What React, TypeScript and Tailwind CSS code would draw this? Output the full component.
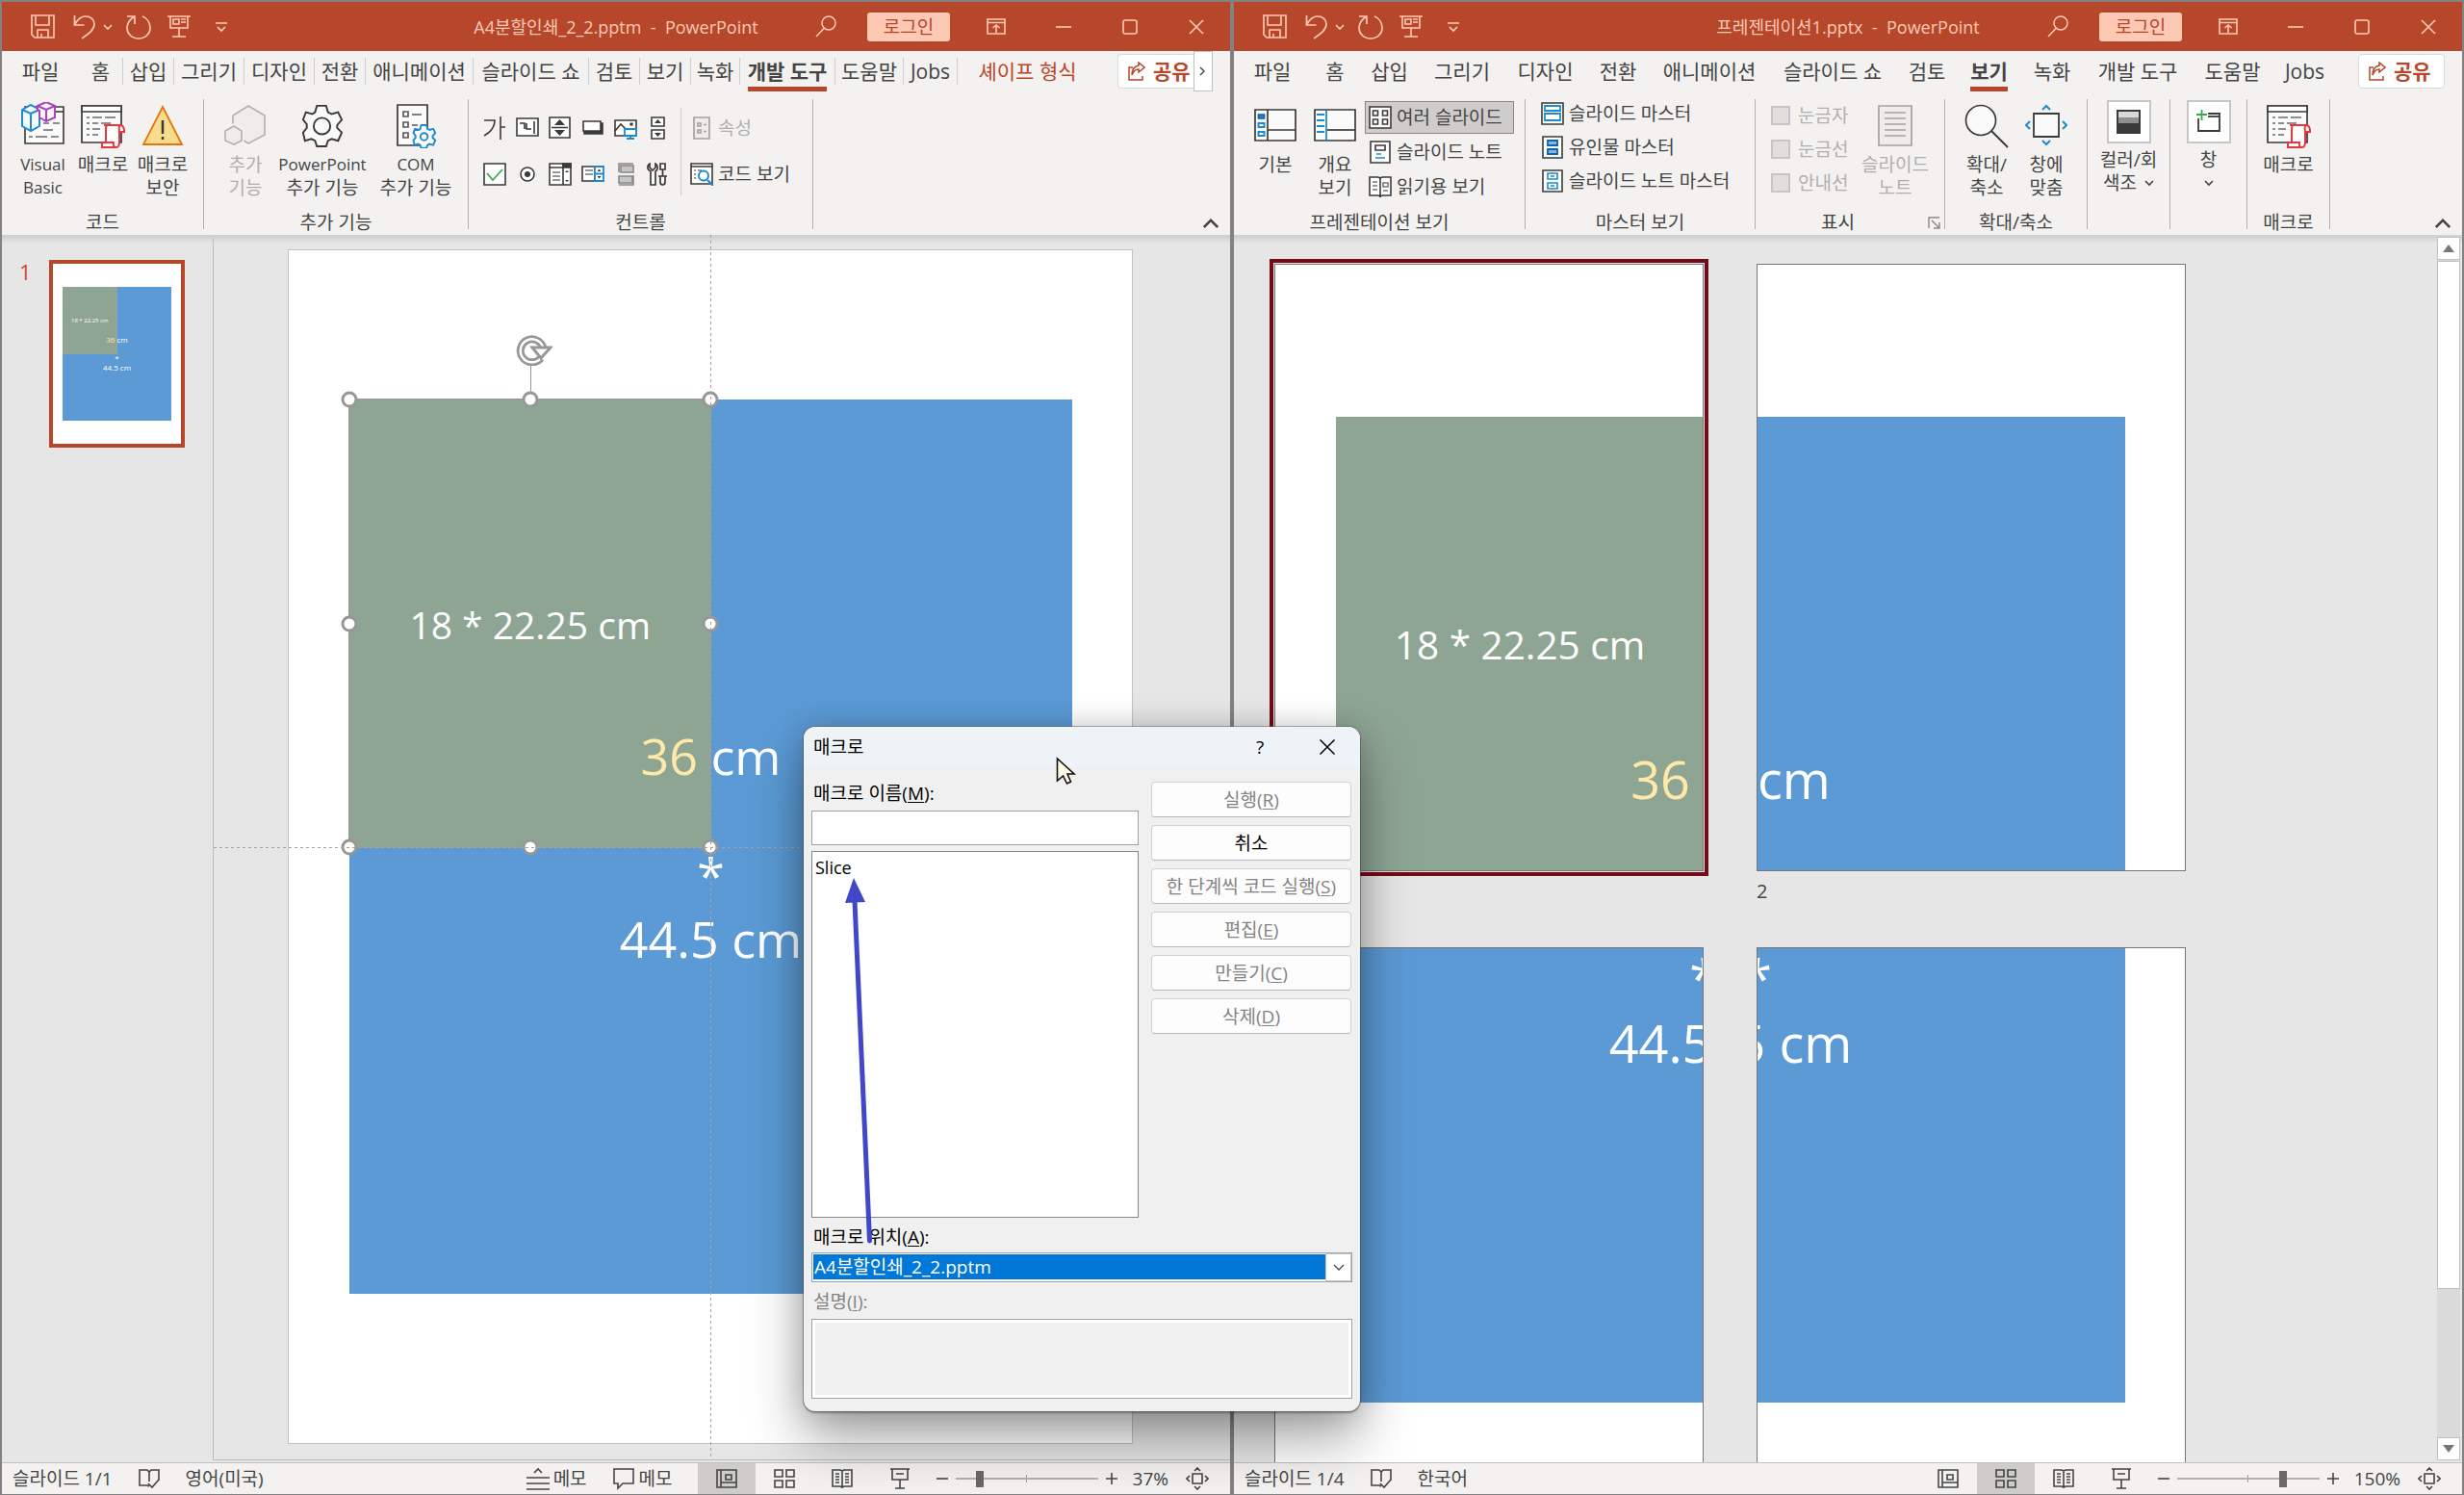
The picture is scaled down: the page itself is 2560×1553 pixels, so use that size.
import { ReactNode } from "react";
import { clsx } from "clsx";

const ink = "#3b3a39";
const blue = "#1e8bcd";

/* ---------- title bar icons ---------- */

const SaveIcon = () => (
  <svg width="25" height="25" viewBox="0 0 25 25" fill="none" stroke="currentColor" strokeWidth="1.6">
    <path d="M1 1h23v23H4l-3-3zM5 1v10h14V1M7 24v-8h11v8M11 20v4" />
  </svg>
);

const UndoIcon = () => (
  <svg width="24" height="26" viewBox="0 0 24 26" fill="none" stroke="currentColor" strokeWidth="1.7">
    <path d="M1.500 1v10h10M1.500 11C5 4 9 2 13 2c5 0 9 3 9 8 0 6-6 10-13 15" />
  </svg>
);

const RedoIcon = () => (
  <svg width="26" height="26" viewBox="0 0 26 26" fill="none" stroke="currentColor" strokeWidth="1.7">
    <path d="M1 2h8v8M9 2C4 5 1 9 1 14c0 6 5 11 12 11s12-5 12-11c0-5-3-10-8-12" />
  </svg>
);

const PresentIcon = () => (
  <svg width="24" height="25" viewBox="0 0 24 25" fill="none" stroke="currentColor" strokeWidth="1.6">
    <path d="M0 2h24M3 2v12h18V2M6 5h6v5H6zM14 5h5M14 8h5M12 14v9M5 23h14" />
  </svg>
);

const SearchIcon = () => (
  <svg width="22" height="24" viewBox="0 0 22 24" fill="none" stroke="currentColor" strokeWidth="1.5">
    <circle cx="14" cy="8" r="7" />
    <path d="M9.500 13L1 22" />
  </svg>
);

const Chevron = ({ size = 10, up = false }: { size?: number; up?: boolean }) => (
  <svg width={size} height={size} viewBox="0 0 10 10" fill="none" stroke="currentColor" strokeWidth="1.6">
    <path d={up ? "M.500 7.500L5 3l4.500 4.500" : "M1 3l4 4 4-4"} />
  </svg>
);

/* ---------- large ribbon icons ---------- */

const VisualBasicIcon = () => (
  <svg width="48" height="48" viewBox="0 0 48 48" fill="none" strokeWidth="1.600">
    <path d="M5 5h40v38H5z" fill="#fafafa" stroke={ink} />
    <path d="M33 10h12" stroke={ink} />
    <path d="M24 22h6M34 22h7M24 29h10M9 36h4M16 36h12M32 36h8" stroke="#6b6b6b" />
    <path d="M2 8l9-5 9 5v17l-9 5-9-5z" fill="#f5faff" stroke={blue} strokeWidth="2" />
    <path d="M2 8l9 4 9-4M11 12v18" stroke={blue} strokeWidth="2" />
    <path d="M18 4l9-4 9 4v12l-9 4-7-4V9l-2-1z" fill="#fbf5ff" stroke="#a845b8" strokeWidth="2" />
    <path d="M18 4l9 4 9-4M27 8v12" stroke="#a845b8" strokeWidth="2" />
  </svg>
);

const MacroIcon = () => (
  <svg width="46" height="48" viewBox="0 0 46 48" fill="none" strokeWidth="1.700">
    <path d="M1 4h41v38H1z" fill="#fafafa" stroke={ink} />
    <path d="M1 4h41v6H1z" fill="#fff" stroke={ink} />
    <path d="M6 16h3M12 16h10M25 16h11M6 22h3M12 22h6M21 22h10M6 28h3M12 28h8M6 34h3M12 34h6" stroke="#6b6b6b" />
    <path d="M24 24h17q4 0 4 7h-5v10q0 6-3 6H22v-5h4V28q0-4 2-4z" fill="#fff" stroke="#e8383d" strokeWidth="2" />
    <path d="M41 24q-2 1-1 7M22 42h12q-1 5 3 5" stroke="#e8383d" strokeWidth="2" />
  </svg>
);

const WarningIcon = () => (
  <svg width="44" height="48" viewBox="0 0 44 48">
    <path d="M22 5l20 39H2z" fill="#f8dc8e" stroke="#e3760b" strokeWidth="1.800" />
    <path d="M22 19v14M22 36v3" stroke={ink} strokeWidth="2.500" />
  </svg>
);

const AddinIcon = () => (
  <svg width="44" height="48" viewBox="0 0 44 48" fill="#eeedec" stroke="#b5b3b1" strokeWidth="1.700">
    <path d="M25 4l17 10v20L25 43 9 33V14z" />
    <path d="M10 25l8 5v10l-8 4-9-4V30z" stroke="#f3f2f1" strokeWidth="5" />
    <path d="M10 25l8 5v10l-8 4-9-4V30z" />
  </svg>
);

const gearPath =
  "M16 2h10l2 7 4 2 7-2 4 8-5 6v3l5 5-4 9-7-2-4 2-2 6H16l-2-6-4-2-7 2-2-9 4-5v-4l-4-5 3-8 7 2 3-2z";

const GearIcon = () => (
  <svg width="44" height="46" viewBox="-1 -1 46 48" fill="#fafafa" stroke={ink} strokeWidth="2">
    <path d={gearPath} />
    <circle cx="21.500" cy="24" r="9" />
  </svg>
);

const ComIcon = () => (
  <svg width="44" height="48" viewBox="0 0 44 48" fill="none" strokeWidth="1.700">
    <path d="M3 3h31v42H3z" fill="#fafafa" stroke={ink} />
    <path d="M9 10h5v5H9zM9 21h5v5H9zM9 32h5v5H9zM18 13h10M18 24h6" stroke="#5a5a5a" />
    <g transform="translate(19 23) scale(.54)" fill="#fff" stroke={blue} strokeWidth="3.600">
      <path d={gearPath} />
      <circle cx="21.500" cy="24" r="7" />
    </g>
  </svg>
);

const NormalViewIcon = () => (
  <svg width="44" height="48" viewBox="0 0 44 48" fill="none" strokeWidth="1.700">
    <path d="M1 8h42v32H1z" fill="#fafafa" stroke={ink} />
    <path d="M14 8v32M14 29h29" stroke={ink} />
    <path d="M4.500 13h6v4h-6z" fill="#2f7fc8" stroke="#0f62ad" />
    <path d="M4.500 22h6v4h-6zM4.500 31h6v4h-6z" fill="#fff" stroke={blue} strokeWidth="2" />
  </svg>
);

const OutlineViewIcon = () => (
  <svg width="44" height="48" viewBox="0 0 44 48" fill="none" strokeWidth="1.700">
    <path d="M1 8h42v32H1z" fill="#fafafa" stroke={ink} />
    <path d="M14 29h29" stroke={ink} />
    <path d="M13 8v32M3 13h8M3 19h8M3 25h8M3 31h8" stroke={blue} strokeWidth="1.800" />
  </svg>
);

const NotesPageIcon = () => (
  <svg width="36" height="48" viewBox="0 0 36 48" fill="#eeedec" stroke="#a5a3a1" strokeWidth="1.700">
    <path d="M1 4h34v41H1z" />
    <path d="M7 11h22M7 17h22M7 23h22M7 29h22M7 35h22" />
  </svg>
);

const ZoomIcon = () => (
  <svg width="46" height="48" viewBox="0 0 46 48" fill="#fafafa" stroke={ink} strokeWidth="1.700">
    <path d="M28 30l17 17" strokeWidth="2" />
    <circle cx="17" cy="19" r="15.500" />
  </svg>
);

const FitIcon = () => (
  <svg width="44" height="48" viewBox="0 0 44 48" fill="none" strokeWidth="1.800">
    <path d="M9 12h26v24H9z" fill="#fafafa" stroke={ink} />
    <path d="M18 8l4-4 4 4M18 40l4 4 4-4M5 20l-4 4 4 4M39 20l4 4-4 4" stroke={blue} strokeWidth="2" />
  </svg>
);

const ColorIcon = () => (
  <svg width="25" height="25" viewBox="0 0 25 25">
    <path d="M0 0h25v25H0z" fill={ink} />
    <path d="M2 2h21v6H2z" fill="#d8d8d8" />
    <path d="M2 8h21v6H2z" fill="#8f8f8f" />
  </svg>
);

const NewWindowIcon = () => (
  <svg width="25" height="25" viewBox="0 0 25 25" fill="none" strokeWidth="1.800">
    <path d="M12 4h12v18H2V9" stroke={ink} />
    <path d="M12 7h12" stroke={ink} />
    <path d="M0 5h11M5.500 0v11" stroke="#3aa655" />
  </svg>
);

/* ---------- small ribbon icons ---------- */

const Small = ({ children }: { children: ReactNode }) => (
  <svg width="24" height="24" viewBox="0 0 24 24" fill="#fff" stroke={ink} strokeWidth="1.600">
    {children}
  </svg>
);

const controlIcons: { name: string; icon: ReactNode }[] = [
  {
    name: "레이블",
    icon: (
      <Small>
        <path d="M1 4h11c0 7-4 12-11 16M18 0v24M18 11h5" fill="none" />
      </Small>
    ),
  },
  {
    name: "텍스트 상자",
    icon: (
      <Small>
        <path d="M1 2h22v18H1z" />
        <path d="M4 7h5v6M11 7v6h5M19 5v13" fill="none" />
      </Small>
    ),
  },
  {
    name: "스핀 단추",
    icon: (
      <Small>
        <path d="M1 1h21v21H1zM3 11.500h17" />
        <path d="M6 9l5.500-6L17 9zM6 14l5.500 6 5.500-6z" fill={ink} stroke="none" />
      </Small>
    ),
  },
  {
    name: "명령 단추",
    icon: (
      <Small>
        <path d="M3 7h19v11H3z" fill={ink} />
        <path d="M2 5h18v10H2z" />
      </Small>
    ),
  },
  {
    name: "이미지",
    icon: (
      <Small>
        <path d="M1 4h22v16H1z" />
        <path d="M1 15l6-7 6 6" fill="none" />
        <circle cx="18" cy="8" r="1" fill={ink} />
        <path d="M11 13h12v7H11zM17 20v3M13 23h8" stroke={blue} strokeWidth="1.800" />
      </Small>
    ),
  },
  {
    name: "스크롤 막대",
    icon: (
      <Small>
        <path d="M5 1h13v9H5zM5 14h13v9H5z" />
        <path d="M8 7l3.500-4L15 7zM8 17l3.500 4 3.500-4z" fill={ink} stroke="none" />
      </Small>
    ),
  },
  {
    name: "확인란",
    icon: (
      <Small>
        <path d="M1 1h22v22H1z" />
        <path d="M4 11l6 7L20 7" fill="none" stroke="#3aa655" strokeWidth="1.800" />
      </Small>
    ),
  },
  {
    name: "옵션 단추",
    icon: (
      <Small>
        <circle cx="12" cy="12" r="7" />
        <circle cx="12" cy="12" r="3" fill={ink} stroke="none" />
      </Small>
    ),
  },
  {
    name: "콤보 상자",
    icon: (
      <Small>
        <path d="M1 1h22v22H1zM1 5h14M15 1v22" />
        <path d="M15 1h8v4h-8z" fill={ink} />
        <path d="M4 10h8M4 14h8M4 18h8" stroke="#777" />
        <path d="M17 10l2-2 2 2zM17 18l2 2 2-2z" fill={ink} stroke="none" />
      </Small>
    ),
  },
  {
    name: "목록 상자",
    icon: (
      <Small>
        <path d="M1 4h13v15H1z" />
        <path d="M4 8h8M4 12h8" stroke="#777" />
        <path d="M14 4h9v15h-9zM14 11.500h9" stroke={blue} strokeWidth="1.800" />
        <path d="M16.500 9l2-2.500 2 2.500zM16.500 14l2 2.500 2-2.500z" fill={ink} stroke="none" />
      </Small>
    ),
  },
  {
    name: "토글 단추",
    icon: (
      <Small>
        <path d="M5 10V1h15" fill="none" stroke="#888" />
        <path d="M7 3h13v7H7zM5 14h14v7H5z" fill="#c8c6c4" stroke="#888" />
        <path d="M20 13v10H5" fill="none" stroke="#888" />
      </Small>
    ),
  },
  {
    name: "기타 컨트롤",
    icon: (
      <Small>
        <path d="M3 1v4l3 3 3-3V1c3 2 3 6 0 8v14H4V9C0 7 0 3 3 1z" strokeWidth="1.700" />
        <path d="M14 1h5v6h-5zM16.500 7v7M14 14h5v6q0 3-2.500 3T14 20zM12 14h9" strokeWidth="1.700" />
      </Small>
    ),
  },
];

const PropertiesIcon = () => (
  <svg width="24" height="24" viewBox="0 0 24 24" fill="#eeedec" stroke="#a5a3a1" strokeWidth="1.700">
    <path d="M4 1h16v22H4zM8 7h3v3H8zM8 14h3v3H8zM14 8.500h3M14 15.500h3" />
  </svg>
);

const ViewCodeIcon = () => (
  <Small>
    <path d="M1 1h22v21H1zM1 4h22" />
    <path d="M4 8h2M8 8h4M4 12h2M4 16h2" stroke="#777" />
    <circle cx="14" cy="13.500" r="5" stroke={blue} strokeWidth="1.900" />
    <path d="M18 18l6 6" stroke={blue} strokeWidth="2.200" />
  </Small>
);

const SorterIcon = () => (
  <Small>
    <path d="M1 1h22v22H1z" />
    <path d="M4.500 5h5v5h-5zM14.500 5h5v5h-5zM4.500 14h5v5h-5zM14.500 14h5v5h-5z" />
  </Small>
);

const NoteIcon = () => (
  <Small>
    <path d="M2 1h20v22H2zM7 5h10v5H7z" />
    <path d="M8 14h5M7 18h10" stroke={blue} />
  </Small>
);

const ReadIcon = () => (
  <Small>
    <path d="M1 2h8q3 0 3 2 0-2 3-2h8v19h-8q-3 0-3 2 0-2-3-2H1zM12 4v18" />
    <path d="M4 7h5M4 11h5M4 15h5M15 8h5v4h-5zM15 16h5" fill="none" stroke="#777" />
  </Small>
);

const SlideMasterIcon = () => (
  <Small>
    <path d="M1 1h22v22H1z" />
    <path d="M4 4h16v5H4zM4 12h16v7H4z" stroke={blue} strokeWidth="1.800" />
  </Small>
);

const HandoutMasterIcon = () => (
  <Small>
    <path d="M2 1h20v22H2z" />
    <path d="M7 5h10v5H7zM7 14h10v5H7z" fill="#7db8ea" stroke="#0f62ad" strokeWidth="1.800" />
  </Small>
);

const NotesMasterIcon = () => (
  <Small>
    <path d="M2 1h20v22H2z" />
    <path d="M7 4h10v6H7zM7 14h10v6H7zM10 7h4M10 17h4" stroke={blue} strokeWidth="1.600" />
  </Small>
);

/* ---------- status bar icons ---------- */

const Status = ({ children }: { children: ReactNode }) => (
  <svg width="24" height="24" viewBox="0 0 24 24" fill="none" stroke="#444" strokeWidth="1.600">
    {children}
  </svg>
);

const statusViews: { name: string; icon: ReactNode }[] = [
  {
    name: "기본",
    icon: (
      <Status>
        <path d="M2 3h20v18H2zM6 3v18M6 16h16M11 8h6v5h-6z" />
      </Status>
    ),
  },
  {
    name: "여러 슬라이드",
    icon: (
      <Status>
        <path d="M2 3h8v7H2zM14 3h8v7h-8zM2 14h8v7H2zM14 14h8v7h-8z" />
      </Status>
    ),
  },
  {
    name: "읽기용 보기",
    icon: (
      <Status>
        <path d="M2 3h8l2 1 2-1h8v17h-8l-2 1-2-1H2zM12 4v17M5 7h4M5 10h4M5 13h4M5 16h4M15 7h4M15 10h4M15 13h4M15 16h4" />
      </Status>
    ),
  },
  {
    name: "슬라이드 쇼",
    icon: (
      <Status>
        <path d="M2 2h20M4 2v11h16V2M8 7h8M12 13v9M7 22h10" />
      </Status>
    ),
  },
];

const ProofIcon = () => (
  <Status>
    <path d="M12 20l-2-1H2V3h8l2 2 2-2h8v11M12 5v10M11 17l4 4 7-8" />
  </Status>
);

const FitSmallIcon = () => (
  <Status>
    <path d="M7 7h10v10H7zM9 4l3-3 3 3M9 20l3 3 3-3M4 9l-3 3 3 3M20 9l3 3-3 3" />
  </Status>
);

/* ---------- shared window parts ---------- */

const TitleBar = ({ title }: { title: string }) => (
  <header className="grid h-[51px] shrink-0 grid-cols-[1fr_auto_1fr] items-center bg-[#b7472a] text-[#fdc9b5]">
    <div className="flex items-center pl-[30px]">
      <button aria-label="저장" className="w-[44px]"><SaveIcon /></button>
      <button aria-label="실행 취소" className="w-[31px]"><UndoIcon /></button>
      <button aria-label="실행 취소 목록" className="w-[24px]"><Chevron /></button>
      <button aria-label="다시 실행" className="w-[43px]"><RedoIcon /></button>
      <button aria-label="처음부터 시작" className="w-[50px]"><PresentIcon /></button>
      <button aria-label="빠른 실행 도구 모음 사용자 지정">
        <svg width="12" height="12" viewBox="0 0 12 12" fill="none" stroke="currentColor" strokeWidth="1.700">
          <path d="M0 2h12M2 6l4 4 4-4" />
        </svg>
      </button>
    </div>
    <h1 className="whitespace-pre text-[18px] leading-6">{title}</h1>
    <div className="flex items-center justify-end pr-[27px]">
      <button aria-label="검색" className="mr-8"><SearchIcon /></button>
      <button className="mr-[38px] h-[30px] w-[86px] rounded-[3px] bg-[#fdc9b5] text-[19px] leading-[30px] text-[#b7472a]">
        로그인
      </button>
      <button aria-label="리본 메뉴 표시 옵션" className="mr-[52px]">
        <svg width="20" height="17" viewBox="0 0 20 17" fill="none" stroke="currentColor" strokeWidth="1.600">
          <path d="M1 1h18v15H1zM1 4.500h18M10 15V7M6.500 10L10 7l3.500 3" />
        </svg>
      </button>
      <button aria-label="최소화" className="mr-[53px]">
        <svg width="16" height="16" viewBox="0 0 16 16" stroke="currentColor" strokeWidth="1.600">
          <path d="M0 8h16" />
        </svg>
      </button>
      <button aria-label="최대화" className="mr-[53px]">
        <svg width="16" height="16" viewBox="0 0 16 16" fill="none" stroke="currentColor" strokeWidth="1.600">
          <rect x="1" y="1" width="14" height="14" rx="2" />
        </svg>
      </button>
      <button aria-label="닫기">
        <svg width="16" height="16" viewBox="0 0 16 16" stroke="currentColor" strokeWidth="1.600">
          <path d="M1 1l14 14M15 1L1 15" />
        </svg>
      </button>
    </div>
  </header>
);

type Tab = { label: string; width: string };

const Tabs = ({
  tabs,
  active,
  divided = false,
  context,
  children,
}: {
  tabs: Tab[];
  active: string;
  divided?: boolean;
  context?: string;
  children: ReactNode;
}) => (
  <nav className="flex h-[42px] shrink-0 items-center text-[21px] leading-[30px] text-[#444]">
    {tabs.map((tab, i) => (
      <div key={tab.label} className={clsx("flex h-full shrink-0 items-center", tab.width)}>
        <button className="flex h-full flex-1 justify-center whitespace-nowrap">
          <span
            className={clsx(
              "h-full border-b-[5px] pt-[6px]",
              tab.label === active ? "border-[#b7472a] font-bold" : "border-transparent",
              tab.label === context && "text-[#b7472a]"
            )}
          >
            {tab.label}
          </span>
        </button>
        {divided && i > 0 && tab.label !== context && <i className="h-7 w-px bg-[#d0cecc]" />}
      </div>
    ))}
    <div className="ml-auto flex h-full items-center">{children}</div>
  </nav>
);

const ShareButton = ({ className }: { className: string }) => (
  <button
    className={clsx(
      "flex h-[36px] items-center gap-2 overflow-hidden rounded border border-[#dddbd9] bg-white pl-[10px] font-bold whitespace-nowrap text-[#b7472a]",
      className
    )}
  >
    <svg width="18" height="20" viewBox="0 0 18 20" fill="none" stroke="currentColor" strokeWidth="1.500" className="shrink-0">
      <path d="M5 6H1v13h14v-4M11 1l6 5-6 5V8c-4 0-5 2-7 6 0-6 2-9 7-10z" />
    </svg>
    공유
  </button>
);

const Group = ({
  label,
  width,
  indent,
  launcher = false,
  children,
}: {
  label: string;
  width: string;
  indent?: string;
  launcher?: boolean;
  children: ReactNode;
}) => (
  <>
    <section className={clsx("flex shrink-0 flex-col", width)}>
      <div className={clsx("flex h-[124px] items-start", indent)}>{children}</div>
      <div className="flex h-6 items-center">
        <span className="flex-1 text-center">{label}</span>
        {launcher && (
          <button aria-label={`${label} 설정`} className="mr-1 ml-2 text-[#8a8886]">
            <svg width="13" height="13" viewBox="0 0 13 13" fill="none" stroke="currentColor" strokeWidth="1.400">
              <path d="M1 12V1h11M4 4l8 8M12 6v6H6" />
            </svg>
          </button>
        )}
      </div>
    </section>
    <i className="mt-2 mb-[6px] w-px shrink-0 bg-[#b3b0ad]" />
  </>
);

const Ribbon = ({ children }: { children: ReactNode }) => (
  <div className="flex h-[149px] shrink-0 text-[19px] leading-6 text-[#444]">
    {children}
    <button aria-label="리본 메뉴 축소" className="mt-auto mr-3 mb-1 ml-auto">
      <Chevron size={16} up />
    </button>
  </div>
);

const LargeButton = ({
  icon,
  lines,
  width,
  disabled = false,
}: {
  icon: ReactNode;
  lines: string[];
  width: string;
  disabled?: boolean;
}) => (
  <button disabled={disabled} className={clsx("flex shrink-0 flex-col items-center pt-[11px]", width, disabled && "text-[#b1afad]")}>
    <span className="mb-[5px] flex h-12 items-center">{icon}</span>
    {lines.map((line) => (
      <span key={line} className={clsx("whitespace-nowrap", /^[A-Z]/.test(line) && "text-[17px] leading-6")}>
        {line}
      </span>
    ))}
  </button>
);

const SmallButton = ({
  icon,
  label,
  disabled = false,
  className,
}: {
  icon: ReactNode;
  label: string;
  disabled?: boolean;
  className: string;
}) => (
  <button
    disabled={disabled}
    className={clsx("flex items-center gap-[5px] whitespace-nowrap", disabled && "text-[#b1afad]", className)}
  >
    {icon}
    {label}
  </button>
);

const StatusBar = ({
  page,
  language,
  zoom,
  position,
  activeView,
  notes = false,
}: {
  page: string;
  language: string;
  zoom: string;
  position: number;
  activeView: string;
  notes?: boolean;
}) => (
  <footer className="flex h-[33px] shrink-0 items-center border-t border-[#c3c1bf] bg-[#f3f2f1] text-[19px] leading-6 text-[#444]">
    <span className="pl-[11px]">{page}</span>
    <button aria-label="맞춤법 검사" className="mr-[26px] ml-[26px]"><ProofIcon /></button>
    <button>{language}</button>
    <div className="ml-auto flex h-full items-center">
      {notes && (
        <>
          <button className="flex items-center gap-1">
            <Status>
              <path d="M8 6l4-4 4 4M0 11h24M0 17h24M0 23h24" />
            </Status>
            메모
          </button>
          <button className="mr-[26px] ml-[26px] flex items-center gap-1">
            <Status>
              <path d="M2 2h20v15H11l-5 5v-5H2z" />
            </Status>
            메모
          </button>
        </>
      )}
      {statusViews.map((view) => (
        <button
          key={view.name}
          aria-label={view.name}
          className={clsx("flex h-full w-[60px] items-center justify-center", view.name === activeView && "bg-[#cfcdcb]")}
        >
          {view.icon}
        </button>
      ))}
      <button aria-label="축소" className="ml-2 w-[20px]">
        <svg width="12" height="12" viewBox="0 0 12 12" stroke="#444" strokeWidth="1.600">
          <path d="M0 6h12" />
        </svg>
      </button>
      <div className="relative flex h-[17px] w-[148px] items-center justify-center">
        <i className="absolute h-2 w-px bg-[#a19f9d]" />
        <input
          type="range"
          aria-label="확대/축소"
          defaultValue={position}
          className="relative h-[17px] w-full appearance-none bg-[linear-gradient(#b3b0ad,#b3b0ad)] bg-[length:100%_2px] bg-center bg-no-repeat [&::-webkit-slider-thumb]:h-[17px] [&::-webkit-slider-thumb]:w-2 [&::-webkit-slider-thumb]:appearance-none [&::-webkit-slider-thumb]:bg-[#6b6967]"
        />
      </div>
      <button aria-label="확대" className="ml-2 w-7">
        <svg width="12" height="12" viewBox="0 0 12 12" stroke="#444" strokeWidth="1.600">
          <path d="M0 6h12M6 0v12" />
        </svg>
      </button>
      <span>{zoom}</span>
      <button aria-label="창에 맞춤" className="mr-[22px] ml-[18px]"><FitSmallIcon /></button>
    </div>
  </footer>
);

// The blue sheet with its green quarter; text follows the font size of the caller.
const Artwork = ({
  className,
  quarter = true,
  upper = true,
  lower = true,
}: {
  className: string;
  quarter?: boolean;
  upper?: boolean;
  lower?: boolean;
}) => (
  <div className={clsx("absolute bg-[#5b9ad5] text-center leading-none whitespace-nowrap text-white", className)}>
    <div className="h-1/2 w-1/2 bg-[#8fa594]" />
    {quarter && <p className="absolute top-[23%] left-0 w-1/2 text-[0.75em] leading-none">18 * 22.25 cm</p>}
    {upper && (
      <p className="absolute inset-x-0 top-[37%]">
        <span className="text-[#ffe9a9]">36</span> cm
      </p>
    )}
    {lower && (
      <>
        <p className="absolute inset-x-0 top-[50.4%]">*</p>
        <p className="absolute inset-x-0 top-[57.5%]">44.5 cm</p>
      </>
    )}
  </div>
);

/* ---------- left window ---------- */

const leftTabs: Tab[] = [
  { label: "파일", width: "w-[80px]" },
  { label: "홈", width: "w-[46px]" },
  { label: "삽입", width: "w-[53px]" },
  { label: "그리기", width: "w-[73px]" },
  { label: "디자인", width: "w-[73px]" },
  { label: "전환", width: "w-[53px]" },
  { label: "애니메이션", width: "w-[112px]" },
  { label: "슬라이드 쇼", width: "w-[120px]" },
  { label: "검토", width: "w-[53px]" },
  { label: "보기", width: "w-[53px]" },
  { label: "녹화", width: "w-[51px]" },
  { label: "개발 도구", width: "w-[99px]" },
  { label: "도움말", width: "w-[71px]" },
  { label: "Jobs", width: "w-[56px]" },
  { label: "셰이프 형식", width: "w-[145px]" },
];

const handles = [
  "left-0 top-0",
  "left-1/2 top-0",
  "left-full top-0",
  "left-0 top-1/2",
  "left-full top-1/2",
  "left-0 top-full",
  "left-1/2 top-full",
  "left-full top-full",
];

const SelectionBox = () => (
  <div className="absolute top-[154px] left-[62px] h-[467px] w-[377px] border border-[#979797]">
    <i className="absolute -top-9 left-1/2 h-9 w-px bg-[#979797]" />
    <svg width="40" height="34" viewBox="0 0 40 34" fill="none" className="absolute -top-[69px] left-[171px]">
      <path d="M28 26a12 12 0 1 1 2.500-10" stroke="#979797" strokeWidth="8" />
      <path d="M28 26a12 12 0 1 1 2.500-10" stroke="#fff" strokeWidth="2.500" />
      <path d="M19 15h19l-10 11z" fill="#fff" stroke="#979797" strokeWidth="3" />
    </svg>
    {handles.map((place) => (
      <i
        key={place}
        className={clsx(
          "absolute size-[17px] -translate-x-1/2 -translate-y-1/2 rounded-full border-[3px] border-[#979797] bg-white",
          place
        )}
      />
    ))}
  </div>
);

const EditorWindow = () => (
  <div className="flex min-w-0 flex-col border-2 border-b border-[#828282] bg-[#f3f2f1]">
    <TitleBar title="A4분할인쇄_2_2.pptm  -  PowerPoint" />
    <Tabs tabs={leftTabs} active="개발 도구" context="셰이프 형식" divided>
      <ShareButton className="w-[79px] rounded-r-none border-r-0" />
      <button aria-label="탭 더 보기" className="mr-[18px] h-full w-5 border border-[#c3c1bf] bg-white pl-1">
        <svg width="8" height="10" viewBox="0 0 8 10" fill="none" stroke="#444" strokeWidth="1.400">
          <path d="M2 1l4 4-4 4" />
        </svg>
      </button>
    </Tabs>
    <Ribbon>
      <Group label="코드" width="w-[209px]" indent="pl-[11px]">
        <LargeButton icon={<VisualBasicIcon />} lines={["Visual", "Basic"]} width="w-[63px]" />
        <LargeButton icon={<MacroIcon />} lines={["매크로"]} width="w-[62px]" />
        <LargeButton icon={<WarningIcon />} lines={["매크로", "보안"]} width="w-[62px]" />
      </Group>
      <Group label="추가 기능" width="w-[274px]" indent="pl-[13px]">
        <LargeButton icon={<AddinIcon />} lines={["추가", "기능"]} width="w-[60px]" disabled />
        <LargeButton icon={<GearIcon />} lines={["PowerPoint", "추가 기능"]} width="w-[100px]" />
        <LargeButton icon={<ComIcon />} lines={["COM", "추가 기능"]} width="w-[94px]" />
      </Group>
      <Group label="컨트롤" width="w-[357px]">
        <div className="grid grid-cols-6 pt-[14px] pl-[10px]">
          {controlIcons.map((control) => (
            <button key={control.name} aria-label={control.name} className="flex h-12 w-[34px] items-center justify-center">
              {control.icon}
            </button>
          ))}
        </div>
        <i className="mt-[17px] ml-[6px] h-[91px] w-px bg-[#d0cecc]" />
        <div className="pt-[14px] pl-[9px]">
          <SmallButton icon={<PropertiesIcon />} label="속성" className="h-12" disabled />
          <SmallButton icon={<ViewCodeIcon />} label="코드 보기" className="h-12" />
        </div>
      </Group>
    </Ribbon>
    <main className="flex min-h-0 flex-1 bg-[#e6e6e6] bg-[linear-gradient(#cdcdcd,#e6e6e6)] bg-[length:100%_9px] bg-no-repeat">
      <aside className="mt-[3px] flex w-[220px] shrink-0 items-start border-r border-[#bdbbb9] pt-[23px] pl-[18px]">
        <span className="w-[31px] text-[22px] leading-6 text-[#d24726]">1</span>
        <div className="relative h-[195px] w-[141px] overflow-hidden border-4 border-[#b7472a] bg-white">
          <Artwork className="top-6 left-[10px] h-[139px] w-[113px] text-[8px]" />
        </div>
      </aside>
      <div className="relative min-w-0 flex-1 overflow-hidden border-b border-[#bdbbb9] pt-[15px] pl-[77px]">
        <div className="relative h-[1241px] w-[878px] border border-[#c3c3c3] bg-white">
          <Artwork className="top-[155px] left-[63px] h-[929px] w-[751px] text-[52px]" />
          <SelectionBox />
        </div>
        <i className="absolute inset-y-0 left-[516px] w-px bg-[repeating-linear-gradient(to_bottom,#a6a29e_0_3px,transparent_3px_6px)]" />
        <i className="absolute inset-x-0 top-[636px] h-px bg-[repeating-linear-gradient(to_right,#a6a29e_0_3px,transparent_3px_6px)]" />
      </div>
    </main>
    <i className="h-[2px] shrink-0 bg-[#e6e6e6]" />
    <StatusBar page="슬라이드 1/1" language="영어(미국)" zoom="37%" position={15} activeView="기본" notes />
  </div>
);

/* ---------- right window ---------- */

const rightTabs: Tab[] = [
  { label: "파일", width: "w-[80px]" },
  { label: "홈", width: "w-[50px]" },
  { label: "삽입", width: "w-[63px]" },
  { label: "그리기", width: "w-[88px]" },
  { label: "디자인", width: "w-[85px]" },
  { label: "전환", width: "w-[66px]" },
  { label: "애니메이션", width: "w-[124px]" },
  { label: "슬라이드 쇼", width: "w-[132px]" },
  { label: "검토", width: "w-[64px]" },
  { label: "보기", width: "w-[65px]" },
  { label: "녹화", width: "w-[66px]" },
  { label: "개발 도구", width: "w-[112px]" },
  { label: "도움말", width: "w-[85px]" },
  { label: "Jobs", width: "w-[65px]" },
];

const slices = [
  { page: "1", art: "left-[63px] top-[158px]", row: 0, column: 0 },
  { page: "2", art: "left-[-382px] top-[158px]", row: 0, column: 1 },
  { page: "3", art: "left-[63px] top-[-472px]", row: 1, column: 0 },
  { page: "4", art: "left-[-382px] top-[-472px]", row: 1, column: 1 },
];

const SorterWindow = () => (
  <div className="flex min-w-0 flex-col border-2 border-b border-[#828282] bg-[#f3f2f1]">
    <TitleBar title="프레젠테이션1.pptx  -  PowerPoint" />
    <Tabs tabs={rightTabs} active="보기">
      <ShareButton className="mr-[18px] w-[90px]" />
    </Tabs>
    <Ribbon>
      <Group label="프레젠테이션 보기" width="w-[302px]" indent="pl-[12px]">
        <LargeButton icon={<NormalViewIcon />} lines={["기본"]} width="w-[62px]" />
        <LargeButton icon={<OutlineViewIcon />} lines={["개요", "보기"]} width="w-[62px]" />
        <div className="pt-[10px]">
          <SmallButton
            icon={<SorterIcon />}
            label="여러 슬라이드"
            className="h-[34px] w-[155px] border border-[#8a8886] bg-[#cfcdcb] pl-[3px]"
          />
          <SmallButton icon={<NoteIcon />} label="슬라이드 노트" className="mt-[1px] h-9 pl-1" />
          <SmallButton icon={<ReadIcon />} label="읽기용 보기" className="h-9 pl-1" />
        </div>
      </Group>
      <Group label="마스터 보기" width="w-[238px]">
        <div className="pt-[5px] pl-4">
          <SmallButton icon={<SlideMasterIcon />} label="슬라이드 마스터" className="h-[35px]" />
          <SmallButton icon={<HandoutMasterIcon />} label="유인물 마스터" className="h-[35px]" />
          <SmallButton icon={<NotesMasterIcon />} label="슬라이드 노트 마스터" className="h-[35px]" />
        </div>
      </Group>
      <Group label="표시" width="w-[196px]" launcher>
        <div className="pt-[7px] pl-4 text-[#b1afad]">
          {["눈금자", "눈금선", "안내선"].map((name) => (
            <label key={name} className="flex h-[35px] items-center gap-2 whitespace-nowrap">
              <input type="checkbox" disabled className="size-5 appearance-none border-2 border-[#c8c6c4] bg-[#e1dfdd]" />
              {name}
            </label>
          ))}
        </div>
        <LargeButton icon={<NotesPageIcon />} lines={["슬라이드", "노트"]} width="ml-[6px] w-[85px]" disabled />
      </Group>
      <Group label="확대/축소" width="w-[147px]" indent="pl-[12px]">
        <LargeButton icon={<ZoomIcon />} lines={["확대/", "축소"]} width="w-[62px]" />
        <LargeButton icon={<FitIcon />} lines={["창에", "맞춤"]} width="w-[62px]" />
      </Group>
      <Group label="" width="w-[85px]">
        <button className="flex w-full flex-col items-center pt-[9px]">
          <span className="mb-[5px] flex h-[45px] w-[46px] items-center justify-center border-2 border-[#c8c6c4] bg-white">
            <ColorIcon />
          </span>
          컬러/회
          <span className="flex items-center gap-2">색조 <Chevron /></span>
        </button>
      </Group>
      <Group label="" width="w-[79px]">
        <button className="flex w-full flex-col items-center pt-[9px]">
          <span className="mb-[5px] flex h-[45px] w-[46px] items-center justify-center border-2 border-[#c8c6c4] bg-white">
            <NewWindowIcon />
          </span>
          창
          <span className="flex h-6 items-center"><Chevron /></span>
        </button>
      </Group>
      <Group label="매크로" width="w-[85px]">
        <LargeButton icon={<MacroIcon />} lines={["매크로"]} width="w-[85px]" />
      </Group>
    </Ribbon>
    <main className="flex min-h-0 flex-1 bg-[#e6e6e6] bg-[linear-gradient(#cdcdcd,#e6e6e6)] bg-[length:100%_9px] bg-no-repeat">
      <div className="grid h-0 min-h-full flex-1 auto-rows-max grid-cols-[446px_446px] gap-x-[55px] gap-y-[45px] overflow-hidden pt-[30px] pl-[42px]">
        {slices.map((slice) => (
          <figure key={slice.page}>
            <div
              className={clsx(
                "relative h-[631px] w-[446px] overflow-hidden border border-[#767676] bg-white",
                slice.page === "1" && "outline-4 outline-offset-1 outline-[#750b14]"
              )}
            >
              <Artwork
                className={clsx("h-[944px] w-[764px] text-[54px]", slice.art)}
                quarter={slice.row === 0 && slice.column === 0}
                upper={slice.row === 0}
                lower={slice.row === 1}
              />
            </div>
            {slice.row === 0 && (
              <figcaption className="mt-2 text-[20px] leading-[26px] text-[#444]">{slice.page}</figcaption>
            )}
          </figure>
        ))}
      </div>
      <div className="mt-[2px] mr-[2px] mb-[2px] flex w-[24px] flex-col bg-[#dadada]">
        <button aria-label="위로" className="flex h-6 items-center justify-center border border-[#c3c1bf] bg-white">
          <svg width="12" height="8" viewBox="0 0 12 8"><path d="M0 8l6-8 6 8z" fill="#777" /></svg>
        </button>
        <i className="mt-px h-[84%] border border-[#c3c1bf] bg-white" />
        <button aria-label="아래로" className="mt-auto flex h-6 items-center justify-center border border-[#c3c1bf] bg-white">
          <svg width="12" height="8" viewBox="0 0 12 8"><path d="M0 0l6 8 6-8z" fill="#777" /></svg>
        </button>
      </div>
    </main>
    <StatusBar page="슬라이드 1/4" language="한국어" zoom="150%" position={76} activeView="여러 슬라이드" />
  </div>
);

/* ---------- macro dialog ---------- */

const Key = ({ letter }: { letter: string }) => (
  <>
    (<u className="underline-offset-2">{letter}</u>)
  </>
);

const actions = [
  { label: "실행", letter: "R", enabled: false },
  { label: "취소", letter: "", enabled: true },
  { label: "한 단계씩 코드 실행", letter: "S", enabled: false },
  { label: "편집", letter: "E", enabled: false },
  { label: "만들기", letter: "C", enabled: false },
  { label: "삭제", letter: "D", enabled: false },
];

const MacroDialog = () => (
  <div
    role="dialog"
    aria-label="매크로"
    className="absolute top-[755px] left-[835px] w-[578px] rounded-xl bg-[#f0f0f0] text-[19px] leading-6 text-black shadow-[0_0_0_1px_rgba(80,80,80,0.45),0_2px_2px_rgba(0,0,0,0.3),0_28px_56px_rgba(0,0,0,0.36),0_0_30px_rgba(0,0,0,0.16)]"
  >
    <div className="flex h-[42px] items-center rounded-t-xl bg-[#eef3f7] pr-[26px] pl-[10px]">
      <h2 className="flex-1">매크로</h2>
      <button aria-label="도움말" className="mr-[56px] w-3">?</button>
      <button aria-label="닫기">
        <svg width="16" height="16" viewBox="0 0 16 16" stroke="#000" strokeWidth="1.500">
          <path d="M.500.500l15 15M15.500.500l-15 15" />
        </svg>
      </button>
    </div>
    <div className="px-2 pt-[15px] pb-[13px]">
      <div className="flex gap-[13px]">
        <div className="w-[340px]">
          <label htmlFor="macro-name" className="mb-[6px] block pl-[2px]">
            매크로 이름<Key letter="M" />:
          </label>
          <input id="macro-name" className="block h-9 w-full border border-[#a0a0a5] bg-white px-1" />
          <ul className="mt-[6px] h-[381px] border border-[#82878f] bg-white px-[3px] pt-1 text-[18px] leading-6">
            <li>Slice</li>
          </ul>
        </div>
        <div className="flex w-[208px] flex-col gap-2">
          {actions.map((action) => (
            <button
              key={action.label}
              disabled={!action.enabled}
              className={clsx(
                "h-[37px] rounded border border-[#d0d0d0] border-b-[#b8b8b8] bg-[#fdfdfd]",
                !action.enabled && "text-[#838383]"
              )}
            >
              {action.label}
              {action.letter && <Key letter={action.letter} />}
            </button>
          ))}
        </div>
      </div>
      <label htmlFor="macro-place" className="mt-2 mb-1 block pl-[2px]">
        매크로 위치<Key letter="A" />:
      </label>
      <div className="relative h-[31px] border border-[#a0a0a5] bg-white p-px">
        <select id="macro-place" className="block h-[26px] w-[532px] appearance-none bg-[#0078d7] pl-px text-white">
          <option>A4분할인쇄_2_2.pptm</option>
        </select>
        <span className="pointer-events-none absolute inset-y-0 right-0 flex w-[27px] items-center justify-center border border-[#c8c8c8] bg-white">
          <svg width="12" height="8" viewBox="0 0 12 8" fill="none" stroke="#444" strokeWidth="1.300">
            <path d="M1 1l5 5 5-5" />
          </svg>
        </span>
      </div>
      <label htmlFor="macro-info" className="mt-2 mb-[6px] block pl-[2px] text-[#838383]">
        설명<Key letter="I" />:
      </label>
      <textarea
        id="macro-info"
        disabled
        className="block h-[83px] w-full resize-none border border-[#a0a0a5] bg-[#f0f0f0] shadow-[inset_0_0_0_3px_#fff]"
      />
    </div>
    <svg width="40" height="392" viewBox="0 0 40 392" className="pointer-events-none absolute top-[155px] left-[38px]">
      <path d="M15 26l15.500 353" stroke="#4048c8" strokeWidth="5" strokeLinecap="round" />
      <path d="M14 2L5 28l21-1z" fill="#4048c8" />
    </svg>
    <svg width="22" height="30" viewBox="0 0 22 30" className="pointer-events-none absolute top-[31px] left-[262px]">
      <path d="M1.500 2v23l6-5 4 8 4-2-3.500-8H19z" fill="#fffbe6" stroke="#111" strokeWidth="1.600" />
    </svg>
  </div>
);

const App = () => (
  <div className="relative grid min-h-screen grid-cols-2 font-['Open_Sans','Noto_Sans_CJK_KR',sans-serif]">
    <EditorWindow />
    <SorterWindow />
    <MacroDialog />
  </div>
);

export default App;
